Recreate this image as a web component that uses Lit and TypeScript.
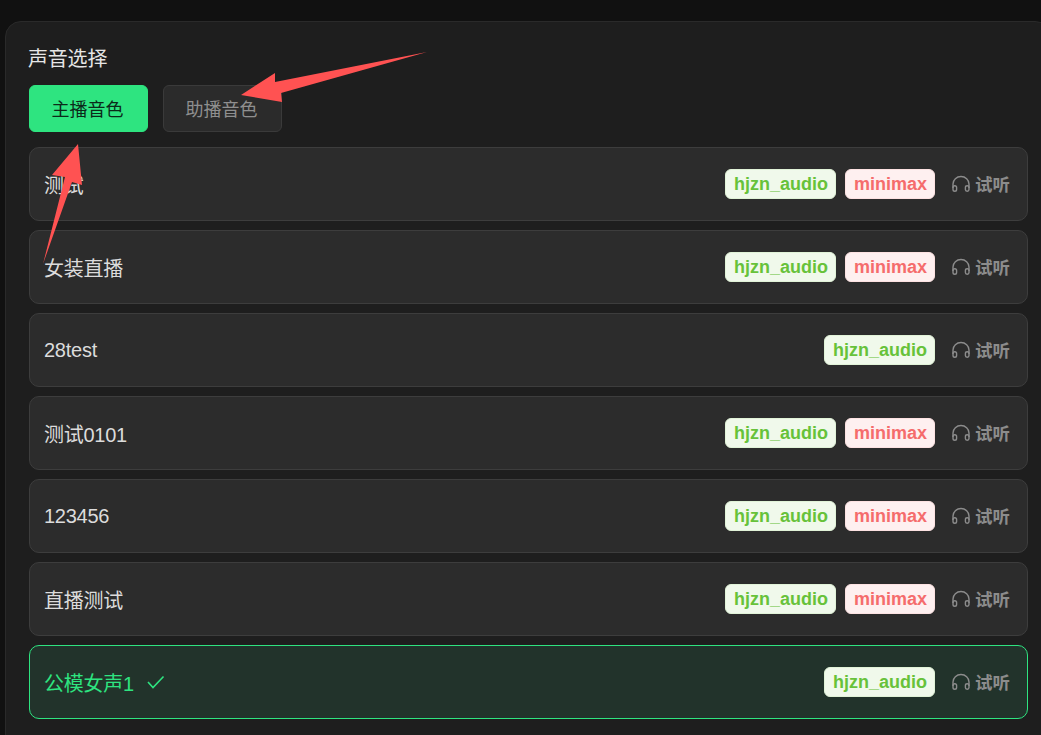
import { LitElement, css, html } from 'lit';
import { customElement } from 'lit/decorators.js';

type Voice = { name: string; minimax: boolean; selected?: boolean };

const voices: Voice[] = [
  { name: '测试', minimax: true },
  { name: '女装直播', minimax: true },
  { name: '28test', minimax: false },
  { name: '测试0101', minimax: true },
  { name: '123456', minimax: true },
  { name: '直播测试', minimax: true },
  { name: '公模女声1', minimax: false, selected: true },
];

@customElement('app-root')
export class AppRoot extends LitElement {
  static styles = css`
    :host {
      display: block;
      position: relative;
      width: 1041px;
      height: 735px;
      overflow: hidden;
      background: #111111;
      font-family: 'Liberation Sans', 'Noto Sans CJK SC', sans-serif;
    }
    .panel {
      box-sizing: border-box;
      width: 1046px;
      height: 760px;
      margin-left: 5px;
      position: relative;
      top: 21px;
      padding: 24px 23px 0;
      background: #1e1e1e;
      border: 1px solid #2a2a2a;
      border-radius: 16px;
    }
    .title {
      margin-left: -1px;
      height: 26px;
      line-height: 26px;
      font-size: 20px;
      letter-spacing: -0.2px;
      color: #e6e6e6;
    }
    .tabs {
      display: flex;
      gap: 15px;
      margin-top: 13px;
    }
    .tab {
      box-sizing: border-box;
      width: 119px;
      height: 47px;
      padding: 0 2px 2px 0;
      display: flex;
      align-items: center;
      justify-content: center;
      font-size: 18px;
      border-radius: 6px;
      border: 1px solid #3a3a3a;
      background: #2b2b2b;
      color: #8f8f8f;
    }
    .tab.active {
      background: #2ee480;
      border-color: #2ee480;
      color: #0c2a1a;
    }
    .list {
      display: flex;
      flex-direction: column;
      gap: 9px;
      margin-top: 15px;
      width: 999px;
    }
    .row {
      box-sizing: border-box;
      height: 74px;
      display: flex;
      align-items: center;
      padding: 0 17px 0 14px;
      background: #2c2c2c;
      border: 1px solid #3d3d3d;
      border-radius: 10px;
      color: #dcdcdc;
      font-size: 20px;
    }
    .row.selected {
      background: #22332b;
      border-color: #2ee480;
      color: #2ee480;
    }
    .name {
      flex: 1;
      display: flex;
      align-items: center;
      gap: 13px;
      letter-spacing: -0.25px;
    }
    .tag {
      box-sizing: border-box;
      height: 30px;
      line-height: 28px;
      padding: 0 7px 0 8px;
      margin-left: 9px;
      border-radius: 6px;
      font-size: 18px;
      font-weight: 700;
      border: 1px solid;
    }
    .tag.green {
      background: #f0f9eb;
      border-color: #e1f3d8;
      color: #67c23a;
    }
    .tag.red {
      background: #fef0f0;
      border-color: #fde2e2;
      color: #f56c6c;
    }
    .listen {
      display: flex;
      align-items: center;
      gap: 4px;
      margin-left: 16px;
      font-size: 17.5px;
      font-weight: 700;
      color: #8c8c8c;
    }
    .listen span {
      padding-bottom: 2px;
    }
    .arrows {
      position: absolute;
      left: 0;
      top: 0;
      pointer-events: none;
    }
  `;

  render() {
    return html`
      <div class="panel">
        <div class="title">声音选择</div>
        <div class="tabs">
          <div class="tab active">主播音色</div>
          <div class="tab">助播音色</div>
        </div>
        <div class="list">
          ${voices.map(
            (v) => html`
              <div class="row ${v.selected ? 'selected' : ''}">
                <div class="name">
                  <span>${v.name}</span>
                  ${v.selected
                    ? html`<svg width="18" height="18" viewBox="0 0 18 18" fill="none" stroke="currentColor" stroke-width="1.6">
                        <path d="M1 9 L6 14.5 L16.5 3.5" />
                      </svg>`
                    : ''}
                </div>
                <span class="tag green">hjzn_audio</span>
                ${v.minimax ? html`<span class="tag red">minimax</span>` : ''}
                <div class="listen">
                  <svg width="20" height="18" viewBox="0 0 20 18" fill="none" stroke="currentColor" stroke-width="1.4">
                    <path d="M2 13 V9 A8 7.5 0 0 1 18 9 V13" />
                    <path d="M2 12.5 A1.8 1.8 0 0 1 5.6 12.5 V14.5 A1.8 1.8 0 0 1 2 14.5 Z" />
                    <path d="M14.4 12.5 A1.8 1.8 0 0 1 18 12.5 V14.5 A1.8 1.8 0 0 1 14.4 14.5 Z" />
                  </svg>
                  <span>试听</span>
                </div>
              </div>
            `
          )}
        </div>
      </div>
      <svg class="arrows" width="1041" height="735" viewBox="0 0 1041 735">
        <polygon fill="#ff5252" points="427,52 275,82 275,73 241,95 282,102 281,93" />
        <polygon fill="#ff5252" points="43,264 65,177 52,175 78,144 82,185 72,182" />
      </svg>
    `;
  }
}
